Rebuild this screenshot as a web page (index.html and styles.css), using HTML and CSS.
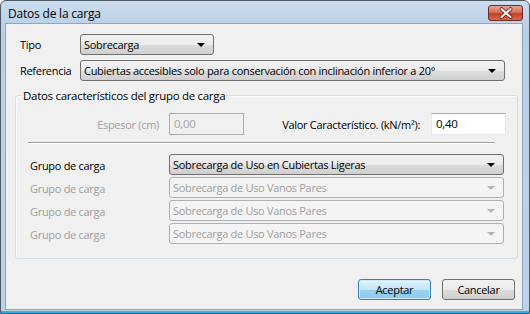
FILE: index.html
```html
<!DOCTYPE html>
<html lang="es">
<head>
  <meta charset="UTF-8" />
  <title>Datos de la carga</title>
  <link rel="stylesheet" href="styles.css">
</head>
<body>
  <div class="window">
    <div class="titlebar">
      <span class="title">Datos de la carga</span>
      <span class="close-btn">
        <svg width="16" height="12" viewBox="0 0 16 12">
          <path d="M3.5 2 L12.5 10 M12.5 2 L3.5 10" stroke="#6b1d12" stroke-width="3.6" stroke-linecap="round"/>
          <path d="M3.5 2 L12.5 10 M12.5 2 L3.5 10" stroke="#ffffff" stroke-width="2" stroke-linecap="round"/>
        </svg>
      </span>
    </div>

    <div class="content">
      <div class="row">
        <label class="lbl">Tipo</label>
        <div class="combo combo-short"><span>Sobrecarga</span><i class="arrow"></i></div>
      </div>
      <div class="row">
        <label class="lbl">Referencia</label>
        <div class="combo combo-wide"><span>Cubiertas accesibles solo para conservación con inclinación inferior a 20°</span><i class="arrow"></i></div>
      </div>

      <fieldset class="group">
        <legend>Datos característicos del grupo de carga</legend>

        <div class="values">
          <label class="lbl-right disabled">Espesor (cm)</label>
          <div class="textbox textbox-disabled">0,00</div>
          <label class="lbl-value">Valor Característico. (kN/m²):</label>
          <div class="textbox">0,40</div>
        </div>

        <div class="separator"></div>

        <div class="groups">
          <label class="lbl-group">Grupo de carga</label>
          <div class="combo"><span>Sobrecarga de Uso en Cubiertas Ligeras</span><i class="arrow"></i></div>
          <label class="lbl-group disabled">Grupo de carga</label>
          <div class="combo combo-disabled"><span>Sobrecarga de Uso Vanos Pares</span><i class="arrow"></i></div>
          <label class="lbl-group disabled">Grupo de carga</label>
          <div class="combo combo-disabled"><span>Sobrecarga de Uso Vanos Pares</span><i class="arrow"></i></div>
          <label class="lbl-group disabled">Grupo de carga</label>
          <div class="combo combo-disabled"><span>Sobrecarga de Uso Vanos Pares</span><i class="arrow"></i></div>
        </div>
      </fieldset>

      <div class="footer">
        <button class="btn btn-default">Aceptar</button>
        <button class="btn">Cancelar</button>
      </div>
    </div>
  </div>
</body>
</html>
```
FILE: styles.css
```css
:root {
  --face: #f0f0f0;
  --text: #000000;
  --disabled-text: #a0a0a0;
  --frame: #b9d1ea;
}
* {
  box-sizing: border-box;
}
body {
  margin: 0;
  font-family: 'Open Sans', sans-serif;
  font-size: 11px;
  letter-spacing: -0.3px;
  color: var(--text);
}
.window {
  width: 530px;
  height: 314px;
  display: flex;
  flex-direction: column;
  border: 1px solid #4d5a66;
  border-radius: 6px 6px 0 0;
  background: linear-gradient(#cbdcee, #b8cfe8 30px, #bdd3ea);
  padding: 0 6px 3px 4px;
  box-shadow: inset 0 -2px 0 #33b1de;
}
.titlebar {
  height: 22px;
  display: flex;
  align-items: center;
  justify-content: space-between;
  padding-left: 3px;
}
.title {
  font-size: 12px;
  letter-spacing: -0.2px;
  color: #000;
  padding-top: 2px;
}
.close-btn {
  width: 35px;
  height: 16px;
  margin-top: 2px;
  margin-right: 0;
  display: flex;
  align-items: center;
  justify-content: center;
  border: 1px solid #6d2a22;
  border-radius: 3px;
  background: linear-gradient(#e8a493, #d3705b 45%, #c2402a 55%, #d66c4f);
}
.content {
  flex: 1;
  background: var(--face);
  border: 1px solid #8ea6bf;
  padding: 10px 11px 0 13px;
  display: flex;
  flex-direction: column;
}
.row {
  display: flex;
  align-items: center;
  height: 21px;
  margin-bottom: 5px;
}
.lbl {
  width: 61px;
  padding-left: 1px;
}
.combo {
  height: 21px;
  border: 1px solid #707070;
  border-radius: 3px;
  background: linear-gradient(#f2f2f2, #ebebeb 50%, #dddddd 51%, #cfcfcf);
  display: flex;
  align-items: center;
  justify-content: space-between;
  padding: 0 8px 0 3px;
  white-space: nowrap;
  overflow: hidden;
}
.combo-short {
  width: 134px;
}
.combo-wide {
  width: 425px;
}
.arrow {
  width: 0;
  height: 0;
  border-left: 4px solid transparent;
  border-right: 4px solid transparent;
  border-top: 4px solid #000;
  margin-top: 1px;
}
.combo-disabled {
  border-color: #adb2b5;
  background: #f4f4f4;
  color: var(--disabled-text);
}
.combo-disabled .arrow {
  border-top-color: #b4b4b4;
}
.group {
  margin: 2px 0 0 -4px;
  width: 503px;
  height: 171px;
  border: 1px solid #d5dfe5;
  border-radius: 3px;
  padding: 10px 11px 0 12px;
  box-shadow: 1px 1px 0 #fff inset;
}
.group legend {
  padding: 0 1px;
  margin-left: -6px;
  font-size: 11.5px;
}
.values {
  display: flex;
  align-items: center;
  height: 22px;
}
.lbl-right {
  width: 131px;
  text-align: right;
  margin-right: 10px;
}
.lbl-value {
  flex: 1;
  text-align: right;
  padding-right: 11px;
}
.textbox {
  width: 75px;
  height: 22px;
  background: #fff;
  border: 1px solid #e3e9ef;
  border-top-color: #abadb3;
  padding: 2px 0 0 4px;
  font-size: 11.5px;
}
.textbox-disabled {
  background: var(--face);
  border-color: #afafaf;
  color: var(--disabled-text);
}
.disabled {
  color: var(--disabled-text);
}
.separator {
  height: 2px;
  margin: 7px 11px 10px 0;
  border-top: 1px solid #a0a0a0;
  border-bottom: 1px solid #ffffff;
}
.groups {
  display: grid;
  grid-template-columns: 141px 335px;
  row-gap: 2px;
  align-items: center;
}
.groups .combo {
  height: 21px;
}
.lbl-group {
  padding-left: 2px;
  padding-top: 2px;
}
.footer {
  display: flex;
  justify-content: flex-end;
  gap: 11px;
  margin-top: 20px;
  margin-right: -4px;
}
.btn {
  width: 73px;
  height: 21px;
  font-family: 'Open Sans', sans-serif;
  font-size: 11px;
  letter-spacing: -0.3px;
  color: #000;
  border: 1px solid #707070;
  border-radius: 3px;
  background: linear-gradient(#f2f2f2, #ebebeb 50%, #dddddd 51%, #cfcfcf);
  padding: 0;
}
.btn-default {
  border-color: #3c7fb1;
  background: linear-gradient(#e5f4fc, #c4e5f6 50%, #98d1ef 51%, #8ecbee);
  box-shadow: inset 0 0 0 1px #ceeaf8;
}
```
